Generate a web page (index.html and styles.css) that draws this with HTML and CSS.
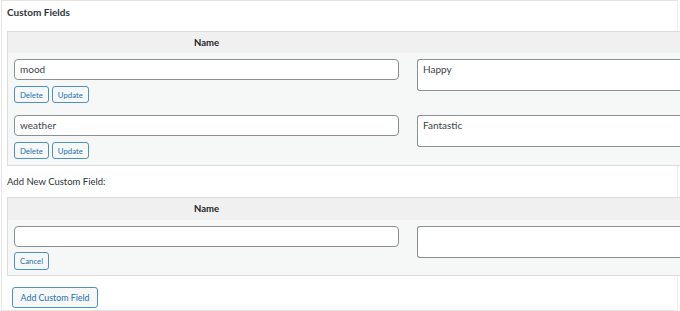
FILE: index.html
```html
<!DOCTYPE html>
<html>
<head>
<meta charset="utf-8">
<link rel="stylesheet" href="styles.css">
</head>
<body>
<div class="postbox">
  <h2 class="box-title">Custom Fields</h2>
  <div class="list-table">
    <div class="thead">
      <div class="th name-col">Name</div>
      <div class="th value-col"></div>
    </div>
    <div class="row">
      <div class="name-col">
        <div class="input">mood</div>
        <div class="btns">
          <span class="btn small">Delete</span>
          <span class="btn small">Update</span>
        </div>
      </div>
      <div class="value-col">
        <div class="textarea">Happy</div>
      </div>
    </div>
    <div class="row">
      <div class="name-col">
        <div class="input">weather</div>
        <div class="btns">
          <span class="btn small">Delete</span>
          <span class="btn small">Update</span>
        </div>
      </div>
      <div class="value-col">
        <div class="textarea">Fantastic</div>
      </div>
    </div>
  </div>
  <p class="add-label">Add New Custom Field:</p>
  <div class="list-table new">
    <div class="thead">
      <div class="th name-col">Name</div>
      <div class="th value-col"></div>
    </div>
    <div class="row single">
      <div class="name-col">
        <div class="input"></div>
        <div class="btns">
          <span class="btn small cancel">Cancel</span>
        </div>
      </div>
      <div class="value-col">
        <div class="textarea"></div>
      </div>
    </div>
  </div>
  <div class="submit-row">
    <span class="btn big">Add Custom Field</span>
  </div>
</div>
</body>
</html>
```

FILE: styles.css
```css
* { box-sizing: border-box; }
html, body {
  margin: 0;
  padding: 0;
  background: #ffffff;
  overflow: hidden;
}
body {
  width: 680px;
  height: 311px;
  font-family: "Lato", "Open Sans", sans-serif;
  color: #1d2327;
}
.postbox {
  margin-left: 1px;
  width: 677px;
  height: 311px;
  border: 1px solid #e4e4e6;
  border-right-color: #eeeeef;
  background: #fff;
  display: flex;
  flex-direction: column;
}
.box-title {
  margin: 0;
  height: 30px;
  padding: 5px 0 0 5px;
  font-size: 10px;
  font-weight: 700;
  line-height: 13px;
  color: #2c3338;
}
.list-table {
  margin-left: 5px;
  margin-right: -3px;
  border: 1px solid #dcdcde;
  border-right: none;
  background: #f6f7f7;
}
.thead {
  display: flex;
  height: 21px;
  background: #f0f0f1;
}
.new .thead { height: 22px; }
.th {
  font-size: 9.5px;
  font-weight: 700;
  line-height: 21px;
  text-align: center;
  color: #1d2327;
}
.name-col {
  width: 403px;
  flex: none;
  padding-left: 6px;
  padding-right: 12px;
}
.value-col {
  flex: 1;
  padding-left: 6px;
}
.row {
  display: flex;
  padding-top: 6px;
  padding-bottom: 6px;
}
.input {
  height: 21px;
  border: 1px solid #8c8f94;
  border-radius: 4px;
  background: #fff;
  font-size: 10px;
  line-height: 19px;
  padding-left: 5px;
  color: #3c434a;
}
.textarea {
  height: 32px;
  border: 1px solid #8c8f94;
  border-right: none;
  border-radius: 3px 0 0 3px;
  background: #fff;
  font-size: 10px;
  line-height: 13px;
  padding: 3px 0 0 5px;
  color: #3c434a;
}
.btns {
  display: flex;
  gap: 3px;
  margin-top: 6px;
}
.btn {
  display: inline-flex;
  align-items: center;
  justify-content: center;
  border: 1px solid #4f8fc4;
  border-radius: 3px;
  background: #f6f7f7;
  color: #2271b1;
  white-space: nowrap;
}
.btn.small {
  height: 17px;
  padding: 0 5px;
  font-size: 7.8px;
}
.new .btns { margin-top: 5px; }
.btn.cancel { height: 18px; }
.row.single { padding-bottom: 5px; }
.add-label {
  margin: 0;
  height: 31px;
  padding: 10px 0 0 5px;
  font-size: 9.5px;
  line-height: 12px;
  color: #2c3338;
}
.submit-row {
  padding: 9px 0 0 10px;
}
.btn.big {
  height: 21px;
  width: 86px;
  font-size: 8.8px;
  padding: 0;
}
```
